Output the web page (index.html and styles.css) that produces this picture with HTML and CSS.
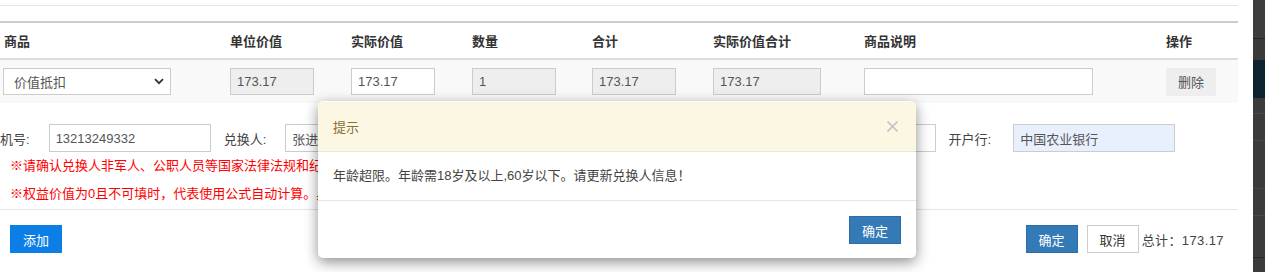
FILE: index.html
```html
<!DOCTYPE html>
<html lang="zh-CN">
<head>
    <meta charset="UTF-8">
    <meta name="viewport" content="width=device-width, initial-scale=1.0">
    <title>兑换信息</title>
    <link rel="stylesheet" href="styles.css">
</head>
<body>
    <div class="layout">
        <div class="page">
            <div class="top-rule"></div>
            <table class="goods">
                <colgroup>
                    <col style="width:230px"><col style="width:121px"><col style="width:121px"><col style="width:120px">
                    <col style="width:121px"><col style="width:151px"><col style="width:302px"><col style="width:72px">
                </colgroup>
                <thead>
                    <tr>
                        <th class="first">商品</th>
                        <th>单位价值</th>
                        <th>实际价值</th>
                        <th>数量</th>
                        <th>合计</th>
                        <th>实际价值合计</th>
                        <th>商品说明</th>
                        <th>操作</th>
                    </tr>
                </thead>
                <tbody>
                    <tr>
                        <td class="first">
                            <div class="select">
                                <span>价值抵扣</span>
                                <svg width="10" height="7" viewBox="0 0 10 7"><path d="M1 1.2 5 5.2 9 1.2" fill="none" stroke="#333" stroke-width="1.8"/></svg>
                            </div>
                        </td>
                        <td><input class="cell-input readonly" value="173.17" readonly></td>
                        <td><input class="cell-input" value="173.17"></td>
                        <td><input class="cell-input readonly" value="1" readonly></td>
                        <td><input class="cell-input readonly" value="173.17" readonly></td>
                        <td><input class="cell-input wide readonly" value="173.17" readonly></td>
                        <td><input class="cell-input desc" value=""></td>
                        <td><button class="btn-delete">删除</button></td>
                    </tr>
                </tbody>
            </table>

            <div class="fields">
                <div class="field"><label>机号:</label><input class="text-input" value="13213249332"></div>
                <div class="field"><label>兑换人:</label><input class="text-input" value="张进"></div>
                <div class="field"><label>证件号:</label><input class="text-input" value="110101199001011234"></div>
                <div class="field"><label>收款卡号:</label><input class="text-input card" value="622848040256489170"></div>
                <div class="field bank"><label>开户行:</label><input class="text-input autofill" value="中国农业银行"></div>
            </div>
            <p class="warn"><span>※请确认兑换人非军人、公职人员等国家法律法规和纪律规定禁止从事营利性活动的人员。</span></p>
            <p class="warn"><span>※权益价值为0且不可填时，代表使用公式自动计算。具体以实际为准。</span></p>

            <div class="actions">
                <button class="btn-add">添加</button>
                <div class="actions-right">
                    <button class="btn btn-primary">确定</button>
                    <button class="btn btn-default">取消</button>
                    <span class="total">总计：173.17</span>
                </div>
            </div>
        </div>
        <div class="side-panel"></div>
    </div>

    <div class="modal">
        <div class="modal-header">
            <span class="modal-title">提示</span>
            <svg class="modal-close" width="11" height="11" viewBox="0 0 11 11"><path d="M0.5 0.5 10.5 10.5M10.5 0.5 0.5 10.5" stroke="#c4c4c4" stroke-width="1.6"/></svg>
        </div>
        <div class="modal-body">年龄超限。年龄需18岁及以上,60岁以下。请更新兑换人信息！</div>
        <div class="modal-footer">
            <button class="btn btn-primary">确定</button>
        </div>
    </div>
</body>
</html>
```

FILE: styles.css
```css
body {
    margin: 0;
    font-family: "Liberation Sans", "Noto Sans CJK SC", sans-serif;
    font-size: 13px;
    color: #333;
    background-color: #fff;
    overflow: hidden;
}
.layout {
    display: flex;
    height: 272px;
}
.page {
    width: 1238px;
    padding-top: 5px;
}
.side-panel {
    margin-left: 15px;
    flex: 1;
    background: linear-gradient(to bottom,
        #3d3d3d 0, #3d3d3d 38px, #1c2a38 38px, #1c2a38 39px,
        #3a3a3a 39px, #3a3a3a 60px, #0e2232 60px, #0e2232 98px,
        #3b3b3b 98px, #3b3b3b 113px, #4a4a4a 113px, #4a4a4a 114px,
        #3b3b3b 114px, #3b3b3b 140px, #4a4a4a 140px, #4a4a4a 141px,
        #3b3b3b 141px, #3b3b3b 188px, #4a4a4a 188px, #4a4a4a 189px,
        #3b3b3b 189px, #3b3b3b 215px, #4a4a4a 215px, #4a4a4a 216px,
        #3b3b3b 216px, #3b3b3b 257px, #1c2a38 257px, #1c2a38 258px,
        #3b3b3b 258px);
}
.top-rule {
    height: 1px;
    background-color: #e5e5e5;
    margin-bottom: 15px;
}
.goods {
    width: 1238px;
    table-layout: fixed;
    border-collapse: collapse;
    border-top: 2px solid #ccc;
}
.goods th {
    text-align: left;
    font-weight: bold;
    height: 34px;
    padding: 0 0 1px;
    border-bottom: 2px solid #ddd;
}
.goods td {
    padding: 0;
    height: 43px;
    background-color: #f9f9f9;
}
.goods .first {
    padding-left: 4px;
}
.goods td.first {
    padding-left: 3px;
}
.select {
    width: 150px;
    height: 25px;
    border: 1px solid #ccc;
    background-color: #fff;
    display: flex;
    align-items: center;
    justify-content: space-between;
    padding: 0 6px 0 10px;
    color: #555;
}
.cell-input {
    box-sizing: border-box;
    width: 84px;
    height: 27px;
    border: 1px solid #ccc;
    padding: 0 6px;
    font-family: inherit;
    font-size: 13px;
    color: #555;
    background-color: #fff;
}
.cell-input.readonly {
    background-color: #eee;
}
.cell-input.wide {
    width: 108px;
}
.cell-input.desc {
    width: 229px;
}
.btn-delete {
    width: 50px;
    height: 28px;
    border: none;
    background-color: #eee;
    color: #555;
    font-family: inherit;
    font-size: 13px;
}
.fields {
    display: flex;
    gap: 13px;
    margin-top: 21px;
}
.field {
    display: flex;
    align-items: center;
}
.field label {
    margin-right: 19px;
    color: #444;
}
.field.bank label {
    margin-right: 22px;
}
.text-input {
    box-sizing: border-box;
    width: 162px;
    height: 28px;
    border: 1px solid #ccc;
    padding: 0 6px;
    font-family: inherit;
    font-size: 13px;
    color: #555;
}
.text-input.card {
    width: 164px;
}
.text-input.autofill {
    background-color: #e8f0fe;
}
.warn {
    color: #f00;
    margin: 0;
    padding-left: 10px;
    line-height: 28px;
}
.warn span {
    display: block;
    width: 308px;
    white-space: nowrap;
    overflow: hidden;
}
.actions {
    border-top: 1px solid #e5e5e5;
    margin-top: 1px;
    padding: 15px 0 0 10px;
    display: flex;
    justify-content: space-between;
    align-items: center;
}
.btn-add {
    width: 52px;
    height: 28px;
    border: none;
    background-color: #0b7fe6;
    color: #fff;
    font-family: inherit;
    font-size: 13px;
}
.actions-right {
    display: flex;
    align-items: center;
    margin-right: 14px;
}
.btn {
    box-sizing: border-box;
    width: 52px;
    height: 28px;
    font-family: inherit;
    font-size: 13px;
    padding: 0;
}
.btn-primary {
    background-color: #337ab7;
    border: 1px solid #2e6da4;
    color: #fff;
}
.btn-default {
    background-color: #fff;
    border: 1px solid #ccc;
    color: #333;
    margin-left: 9px;
}
.total {
    margin-left: 3px;
    color: #444;
    letter-spacing: 0.4px;
}
.modal {
    position: absolute;
    left: 318px;
    top: 101px;
    width: 598px;
    height: 157px;
    background-color: #fff;
    border-radius: 5px;
    box-shadow: 0 4px 14px rgba(0, 0, 0, 0.45);
    overflow: hidden;
}
.modal-header {
    height: 49px;
    background-color: #fcf7e3;
    border-bottom: 1px solid #e5e5e5;
    display: flex;
    align-items: center;
    justify-content: space-between;
    padding: 0 18px 0 15px;
    margin-top: 1px;
}
.modal-title {
    color: #8a6d3b;
}
.modal-body {
    height: 48px;
    line-height: 48px;
    padding: 0 15px;
    border-bottom: 1px solid #e5e5e5;
    color: #444;
}
.modal-footer {
    display: flex;
    justify-content: flex-end;
    padding: 15px 15px 0;
}
```
